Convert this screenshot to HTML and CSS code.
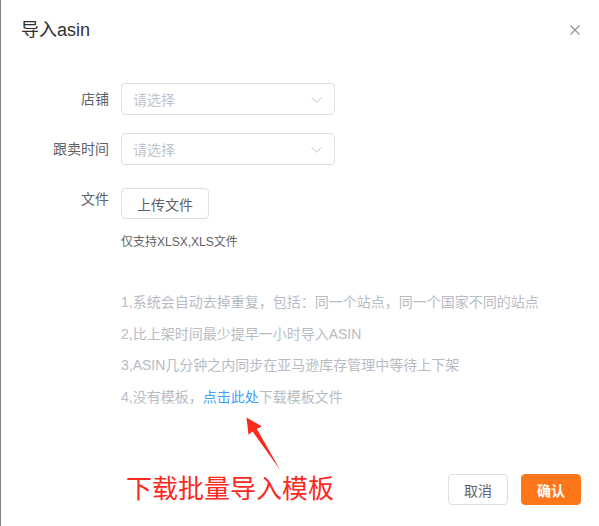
FILE: index.html
```html
<!DOCTYPE html>
<html lang="zh">
<head>
<meta charset="utf-8">
<title>导入asin</title>
<link rel="stylesheet" href="styles.css">
</head>
<body>
<div class="dialog">
  <header class="hd">
    <span class="title">导入asin</span>
    <button class="close" aria-label="关闭">
      <svg width="10" height="10" viewBox="0 0 10 10"><path d="M0.5 0.5L9.5 9.5M9.5 0.5L0.5 9.5" stroke="#909399" stroke-width="1.1" fill="none"/></svg>
    </button>
  </header>

  <div class="form">
    <div class="row row-select">
      <label class="lbl">店铺</label>
      <div class="select"><span class="ph">请选择</span>
        <svg class="chev" width="11" height="6" viewBox="0 0 11 6"><path d="M0.5 0.5L5.5 5.2L10.5 0.5" stroke="#c0c4cc" stroke-width="1" fill="none"/></svg>
      </div>
    </div>
    <div class="row row-select second">
      <label class="lbl">跟卖时间</label>
      <div class="select"><span class="ph">请选择</span>
        <svg class="chev" width="11" height="6" viewBox="0 0 11 6"><path d="M0.5 0.5L5.5 5.2L10.5 0.5" stroke="#c0c4cc" stroke-width="1" fill="none"/></svg>
      </div>
    </div>
    <div class="row row-file">
      <label class="lbl lbl-top">文件</label>
      <div class="filecol">
        <button class="btn upload">上传文件</button>
        <div class="hint">仅支持XLSX,XLS文件</div>
      </div>
    </div>
  </div>

  <ul class="notes">
    <li>1,系统会自动去掉重复，包括：同一个站点，同一个国家不同的站点</li>
    <li>2,比上架时间最少提早一小时导入ASIN</li>
    <li>3,ASIN几分钟之内同步在亚马逊库存管理中等待上下架</li>
    <li>4,没有模板，<a class="link" href="#">点击此处</a>下载模板文件</li>
  </ul>

  <footer class="ft">
    <div class="anno">下载批量导入模板</div>
    <div class="btns">
      <button class="btn cancel">取消</button>
      <button class="btn ok">确认</button>
    </div>
  </footer>

  <svg class="arrow" width="599" height="526" viewBox="0 0 599 526">
    <polygon points="246.5,417.5 262,426.5 256.8,428.8 280.5,470.5 252.6,431.6 248.5,434.8" fill="#fa2a1f"/>
  </svg>
</div>
</body>
</html>
```

FILE: styles.css
```css
* { box-sizing: border-box; }
html, body { margin: 0; padding: 0; background: #fff; }
body {
  font-family: "Liberation Sans", "Noto Sans CJK SC", sans-serif;
  font-size: 14px;
  color: #606266;
}
.dialog {
  position: relative;
  width: 599px;
  height: 526px;
  border-left: 1px solid #7f7f7f;
  overflow: hidden;
}
.hd {
  height: 60px;
  display: flex;
  align-items: center;
  justify-content: space-between;
  padding: 0 20px 0 20px;
}
.title {
  font-size: 18px;
  color: #303133;
  line-height: 24px;
}
.close {
  border: 0;
  background: none;
  padding: 0;
  width: 10px;
  height: 10px;
  display: flex;
  margin-right: -1px;
}
.form {
  padding-top: 23px;
}
.row {
  display: flex;
  align-items: center;
}
.row.second { margin-top: 18px; }
.row-file { margin-top: 23px; align-items: flex-start; }
.lbl {
  width: 120px;
  padding-right: 12px;
  text-align: right;
  line-height: 20px;
  color: #606266;
}
.lbl-top { line-height: 22px; }
.select {
  width: 214px;
  height: 32px;
  border: 1px solid #dcdfe6;
  border-radius: 4px;
  display: flex;
  align-items: center;
  justify-content: space-between;
  padding: 0 12px 0 11px;
}
.ph { color: #c0c4cc; }
.chev { display: block; margin-top: 1px; }
.filecol { display: flex; flex-direction: column; }
.btn {
  font-family: inherit;
  font-size: 14px;
  height: 31px;
  border-radius: 4px;
  cursor: pointer;
  padding: 0;
}
.upload {
  width: 88px;
  background: #fff;
  border: 1px solid #dcdfe6;
  color: #606266;
}
.hint {
  margin-top: 13px;
  font-size: 12px;
  line-height: 20px;
  color: #606266;
}
.notes {
  list-style: none;
  margin: 35px 0 0 0;
  padding: 0 0 0 120px;
  color: #b8bbc2;
  line-height: 31.5px;
}
.link { color: #409eff; text-decoration: none; }
.ft {
  margin-top: 61px;
  display: flex;
  justify-content: space-between;
  align-items: flex-start;
  padding: 0 18px 0 125px;
}
.anno {
  font-size: 26px;
  line-height: 31px;
  color: #fa2a1f;
}
.btns { display: flex; gap: 13px; }
.cancel {
  width: 60px;
  background: #fff;
  border: 1px solid #dcdfe6;
  color: #606266;
}
.ok {
  width: 60px;
  background: #fe761a;
  border: 1px solid #fe761a;
  color: #fff;
  font-weight: bold;
}
.arrow {
  position: absolute;
  left: -1px;
  top: 0;
  pointer-events: none;
}
```
